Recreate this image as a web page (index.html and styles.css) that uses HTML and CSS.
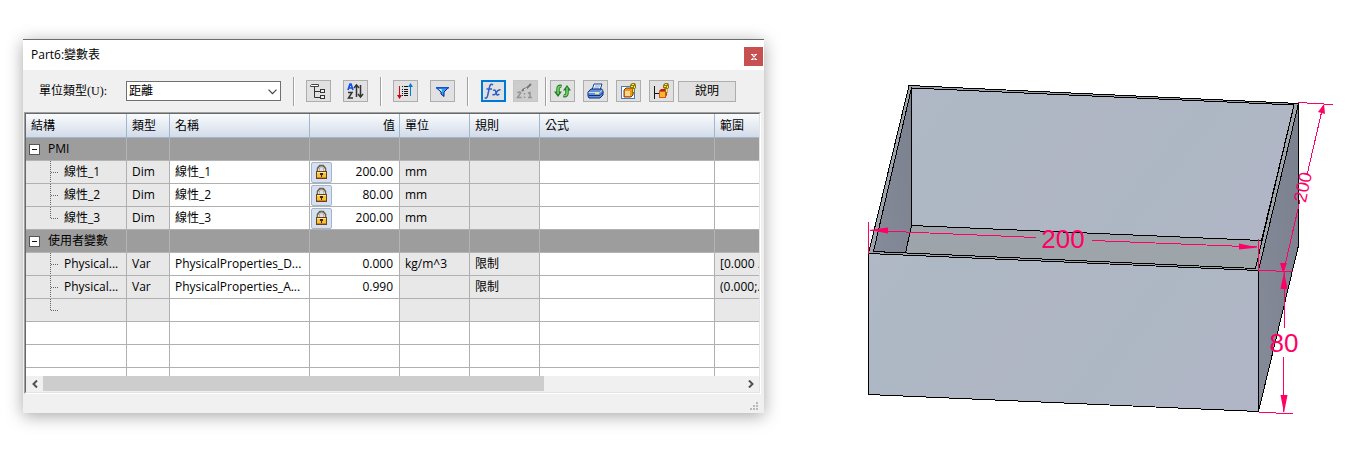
FILE: index.html
```html
<!DOCTYPE html>
<html lang="zh-Hant">
<head>
<meta charset="utf-8">
<title>Part6:變數表</title>
<link rel="stylesheet" href="styles.css">
</head>
<body>
<svg class="defs" aria-hidden="true">
  <defs>
    <symbol id="lock" viewBox="0 0 13 16">
      <path d="M3 8V4.500L5 2h3l2 2.500V8" fill="none" stroke="#6e6250" stroke-width="2.600"/>
      <path d="M3.500 7V4.800L5.200 3h2.600L9.500 4.800V7" fill="none" stroke="#e8dcc0"/>
      <rect x="1.500" y="7.500" width="10" height="7" fill="#f6c335" stroke="#70401c"/>
      <path d="M2 8.500h9" stroke="#fff0a0"/><path d="M2 13.500h9" stroke="#d08a18"/>
      <path d="M5 9h3v2H7v2H6v-2H5z" fill="#48220c"/>
    </symbol>
    <symbol id="elbow" viewBox="0 0 8 23">
      <path d="M.5 0V12" class="dots"/><path d="M1 11.500H8" class="dots"/>
    </symbol>
    <symbol id="tee" viewBox="0 0 8 23">
      <path d="M.5 0V23" class="dots"/><path d="M1 11.500H8" class="dots"/>
    </symbol>
    <symbol id="key" viewBox="0 0 6 11">
      <path d="M2 0h3l1 2v3L4.500 6v4L3 11 2 9V6L0 5V2z" fill="#8b7a14"/>
      <path d="M2 1h2v1H2zM1 3h2v1H1zM4 3h1v2H4zM3 6h1v3H3z" fill="#ffe64a"/>
    </symbol>
  </defs>
</svg>
<main class="page">
  <section class="dialog" aria-labelledby="dialog-title">
    <header class="titlebar">
      <h1 id="dialog-title">Part6:變數表</h1>
      <button class="close" type="button" aria-label="關閉"><svg width="6" height="6" viewBox="0 0 6 6"><path d="M0 .5h2.500M3.500 .5h2.500M1 .5l4 5M5 .5l-4 5M0 5.500h2.500M3.500 5.500h2.500" stroke="#fff" stroke-width="1.200"/></svg></button>
    </header>
    <div class="toolbar">
      <label for="unit-type">單位類型(U):</label>
      <span class="combo">
        <select id="unit-type"><option>距離</option></select>
        <svg width="9" height="6" viewBox="0 0 9 6"><path d="M.5.700l4 4 4-4" fill="none" stroke="#444" stroke-width="1.200"/></svg>
      </span>
      <div class="tools">
        <button type="button" aria-label="樹狀結構"><svg width="17" height="18" viewBox="0 0 17 18"><path d="M4.500 5v10.500H10M4.500 9.500H10" fill="none" stroke="#333"/><path d="M.5 4.500V3.500l1-1h7v2z" fill="#fff" stroke="#444"/><rect x="10.500" y="7.500" width="4" height="3" fill="#eee" stroke="#333"/><rect x="10.500" y="13.500" width="4" height="3" fill="#eee" stroke="#333"/></svg></button>
        <button type="button" aria-label="排序"><svg width="17" height="18" viewBox="0 0 17 18"><path d="M1 8l2-6h1L6 8M2 6h3.500" fill="none" stroke="#1450f0" stroke-width="1.700"/><path d="M1 10.500h4L1.500 16H6" fill="none" stroke="#333" stroke-width="1.500"/><path d="M9.500 15V3M13.500 3v12" stroke="#333" stroke-width="1.500"/><path d="M7 6l2.500-3L12 6M11 12l2.500 3 2.500-3" fill="none" stroke="#333" stroke-width="1.500"/></svg></button>
      </div>
      <div class="tools">
        <button type="button" aria-label="篩選排序"><svg width="17" height="18" viewBox="0 0 17 18"><path d="M2.500 4v10" stroke="#e00010"/><path d="M0 13h5l-2.500 4z" fill="#d00010"/><path d="M5 4.500h1M7 4.500h4M5 7.500h1M7 7.500h4M5 9.500h1M7 9.500h4M5 11.500h1M7 11.500h4M5 13.500h1M7 13.500h4" stroke="#111"/><path d="M13.500 14V4" stroke="#007ad8"/><path d="M11 5h5l-2.500-4z" fill="#007ad8"/></svg></button>
        <button type="button" aria-label="篩選"><svg width="15" height="14" viewBox="0 0 15 14"><path d="M1 3.500h12.500L9 8v4.500L6 10V8z" fill="#35a4ef" stroke="#111d8c"/><path d="M1 3h13v1.500H1z" fill="#1450dc"/><path d="M3.500 5h3L7 8z" fill="#c5f1ff"/></svg></button>
      </div>
      <div class="tools tools-close">
        <button class="active" type="button" aria-label="公式" aria-pressed="true"><svg width="19" height="17" viewBox="0 0 19 17"><path d="M9 2C7 0 5.800 2 5.300 5L3.800 12C3.300 15 2 16 .8 14.500M2.500 6h5.500M9 7.500c2-1.500 2.600 0 3 2 .6 3 1.600 3 3.300 1.500M16.500 7c-2-.8-3.500 1.500-4.500 3-.8 1.500-2 2.400-3.500 1.300" fill="none" stroke="#2b5fc7" stroke-width="1.500"/></svg></button>
        <button class="off" type="button" aria-label="比例" disabled><svg width="19" height="18" viewBox="0 0 19 18"><path d="M1.500 11q2.500-2 3.200 0L1.500 15.500H5.500M8.500 11v1.500M8.500 14.500V16M12 11.500l2-1v5M12 15.500h4" fill="none" stroke="#929292" stroke-width="1.400"/><path d="M6 9l2-2 3-1 4-4" fill="none" stroke="#777" stroke-width="2"/><path d="M8 8l3-2" stroke="#eee"/></svg></button>
      </div>
      <div class="tools tools-wide">
        <button type="button" aria-label="更新"><svg width="17" height="14" viewBox="0 0 17 14"><path d="M7.500 2.500Q4 1.500 4 5v4" fill="none" stroke="#237e26" stroke-width="3.500"/><path d="M0 7.500h8L4 13z" fill="#237e26"/><path d="M7 2.500Q4 2 4 5v5" fill="none" stroke="#70d764" stroke-width="1.600"/><path d="M9.500 11.500Q13 12.500 13 9V5" fill="none" stroke="#237e26" stroke-width="3.500"/><path d="M9 6.500h8L13 1z" fill="#237e26"/><path d="M10 11.500q3 .5 3-2.500V3.500" fill="none" stroke="#70d764" stroke-width="1.600"/></svg></button>
        <button type="button" aria-label="列印"><svg width="17" height="16" viewBox="0 0 17 16"><path d="M5 7l2-6h8l-2 6z" fill="#fff" stroke="#17408c"/><path d="M8 3h5M7 5h5" stroke="#759bd2"/><path d="M1 9l3-3h11l1 2v4l-3 3H2l-1-2z" fill="#5e91dd" stroke="#132d78"/><path d="M1.500 9.500h11L15.500 7" fill="none" stroke="#c6dcff"/><path d="M2 12.500h11l3-3" fill="none" stroke="#132d78"/><path d="M8 10.500h4" stroke="#ffec4e" stroke-width="1.500"/></svg></button>
        <button type="button" aria-label="鎖定視圖"><svg width="17" height="17" viewBox="0 0 17 17"><rect x="1.500" y="3.500" width="13" height="12" fill="#fff" stroke="#4878b8"/><path d="M4 7l2-2h7v7l-2 2H4z" fill="#ef9918" stroke="#7c3714"/><rect x="5" y="8" width="5" height="5" fill="#ffd58e"/><use href="#key" x="10" y="0" width="6" height="11"/></svg></button>
        <button type="button" aria-label="鎖定尺寸"><svg width="17" height="17" viewBox="0 0 17 17"><path d="M1.500 3v13M2 10.500h4" stroke="#111"/><path d="M6 8l2-2h6v6l-2 3H6z" fill="#cf1519"/><rect x="6.500" y="8.500" width="6" height="6" fill="#ffb62c" stroke="#d65518"/><use href="#key" x="10" y="0" width="6" height="11"/></svg></button>
        <button class="help" type="button">說明</button>
      </div>
    </div>
    <div class="grid-frame">
      <div class="viewport">
        <table>
          <colgroup><col class="c-tree"><col class="c-type"><col class="c-name"><col class="c-value"><col class="c-unit"><col class="c-unit"><col class="c-formula"><col></colgroup>
          <thead><tr><th>結構</th><th>類型</th><th>名稱</th><th class="num">值</th><th>單位</th><th>規則</th><th>公式</th><th>範圍</th></tr></thead>
          <tbody>
            <tr class="group"><td><div class="node"><button class="toggle" type="button" aria-label="收合 PMI"></button>PMI</div></td><td></td><td></td><td></td><td></td><td></td><td></td><td></td></tr>
            <tr><td class="ro"><div class="node leaf"><svg class="branch"><use href="#tee"/></svg>線性_1</div></td><td class="ro">Dim</td><td>線性_1</td><td class="val"><div class="locked"><button class="lock" type="button" aria-label="鎖定"><svg width="13" height="16"><use href="#lock"/></svg></button>200.00</div></td><td class="ro">mm</td><td class="ro"></td><td></td><td></td></tr>
            <tr><td class="ro"><div class="node leaf"><svg class="branch"><use href="#tee"/></svg>線性_2</div></td><td class="ro">Dim</td><td>線性_2</td><td class="val"><div class="locked"><button class="lock" type="button" aria-label="鎖定"><svg width="13" height="16"><use href="#lock"/></svg></button>80.00</div></td><td class="ro">mm</td><td class="ro"></td><td></td><td></td></tr>
            <tr><td class="ro"><div class="node leaf"><svg class="branch"><use href="#elbow"/></svg>線性_3</div></td><td class="ro">Dim</td><td>線性_3</td><td class="val"><div class="locked"><button class="lock" type="button" aria-label="鎖定"><svg width="13" height="16"><use href="#lock"/></svg></button>200.00</div></td><td class="ro">mm</td><td class="ro"></td><td></td><td></td></tr>
            <tr class="group"><td><div class="node"><button class="toggle" type="button" aria-label="收合使用者變數"></button>使用者變數</div></td><td></td><td></td><td></td><td></td><td></td><td></td><td></td></tr>
            <tr><td class="ro"><div class="node leaf"><svg class="branch"><use href="#tee"/></svg>Physical...</div></td><td class="ro">Var</td><td>PhysicalProperties_D...</td><td class="num">0.000</td><td class="ro">kg/m^3</td><td class="ro">限制</td><td></td><td class="ro">[0.000 ...</td></tr>
            <tr><td class="ro"><div class="node leaf"><svg class="branch"><use href="#tee"/></svg>Physical...</div></td><td class="ro">Var</td><td>PhysicalProperties_A...</td><td class="num">0.990</td><td class="ro"></td><td class="ro">限制</td><td></td><td class="ro">(0.000;...</td></tr>
            <tr><td class="ro"><div class="node leaf"><svg class="branch"><use href="#elbow"/></svg></div></td><td class="ro"></td><td></td><td></td><td class="ro"></td><td class="ro"></td><td></td><td class="ro"></td></tr>
            <tr><td></td><td></td><td></td><td></td><td></td><td></td><td></td><td></td></tr>
            <tr><td></td><td></td><td></td><td></td><td></td><td></td><td></td><td></td></tr>
            <tr><td></td><td></td><td></td><td></td><td></td><td></td><td></td><td></td></tr>
          </tbody>
        </table>
      </div>
      <div class="scrollbar">
        <button type="button" aria-label="向左捲動"><svg width="6" height="8" viewBox="0 0 6 8"><path d="M5 .5L1.500 4 5 7.500" fill="none" stroke="#505050" stroke-width="2"/></svg></button>
        <div class="track"><div class="thumb"></div></div>
        <button type="button" aria-label="向右捲動"><svg width="6" height="8" viewBox="0 0 6 8"><path d="M1 .5L4.500 4 1 7.500" fill="none" stroke="#505050" stroke-width="2"/></svg></button>
      </div>
    </div>
    <footer class="statusbar"><svg width="8" height="8" viewBox="0 0 8 8" fill="#b8b8b8"><path d="M6 0h2v2H6zM3 3h2v2H3zM6 3h2v2H6zM0 6h2v2H0zM3 6h2v2H3zM6 6h2v2H6z"/></svg></footer>
  </section>

  <svg class="model" viewBox="868 80 466 335" role="img" aria-label="盒體模型 200 × 200 × 80">
    <defs>
      <linearGradient id="face" x1="0" x2="1" y1="0" y2=".3"><stop offset="0" stop-color="#b1b8c7"/><stop offset=".2" stop-color="#adb8c4"/><stop offset=".5" stop-color="#b0b6c4"/><stop offset=".75" stop-color="#adb7c3"/><stop offset="1" stop-color="#b0b6c5"/></linearGradient>
      <linearGradient id="side" x1="0" x2="1" y1="1" y2="0"><stop offset="0" stop-color="#858b99"/><stop offset="1" stop-color="#7b808e"/></linearGradient>
    </defs>
    <g stroke-linejoin="round" stroke="#000" shape-rendering="crispEdges">
      <path d="M909 85.500L1298.500 103.500 1258.500 270.500 868.500 253.500z" fill="#9da5aa"/>
      <path d="M911.500 88L1294 105 1261.500 240.500 911.500 225.500z" fill="url(#face)"/>
      <path d="M911.500 88V225.500L905.500 253 873.500 251.500z" fill="url(#side)"/>
      <path d="M911.500 88L1294 105 1255.500 268.500 873.500 251.500z" fill="none"/>
      <path d="M1298.500 103.500V245.500L1258.500 411.500V270.500z" fill="url(#side)"/>
      <path d="M868.500 253.500L1258.500 270.500V411.500L868.500 394.500z" fill="url(#face)"/>
    </g>
    <g class="dimension">
      <path shape-rendering="crispEdges" d="M868.500 222v32M1258.500 239v32M870 230.500L1036 237.500M1092 240.500L1257 247M1258 270.500L1293 271.500M1259 412.500L1293 413.500M1284.500 272v56M1283.500 357v55M1298 102.500L1333 104.500M1323 106L1307 175M1300 200L1284 270"/>
      <path class="tip" d="M869 230l19-2.500v6zM1258 247.500l-19-4v6zM1284 272l-3.500 17h7zM1284 413l-3.500-18h7zM1324 104l-6 8 7 2zM1283 273l-3-10h7z"/>
      <text x="1063" y="248">200</text>
      <text x="1284" y="352">80</text>
      <text class="depth" x="1302" y="194" transform="rotate(-78 1302 187)">200</text>
    </g>
  </svg>
</main>
</body>
</html>
```
FILE: styles.css
```css
* { box-sizing: border-box; }
body {
  margin: 0;
  background: #fff;
  color: #000;
  font: 12px/16px "Open Sans", "Noto Sans CJK TC", sans-serif;
}
button { margin: 0; padding: 0; border: 0; font: inherit; color: inherit; }
.defs { position: absolute; width: 0; height: 0; }
.dots { stroke: #666; stroke-dasharray: 1 1; fill: none; }

.page {
  display: grid;
  grid-template-columns: minmax(0, 741fr) minmax(0, 466fr);
  gap: 104px;
  align-items: start;
  padding: 39px 36px 56px 23px;
}
.dialog {
  background: #f0f0f0;
  border-top: 1px solid #6b6b6b;
  box-shadow: 0 3px 16px rgba(0, 0, 0, .35);
}
.titlebar {
  display: flex;
  justify-content: space-between;
  height: 30px;
  padding: 7px 1px 0 8px;
  background: #fff;
}
.titlebar h1 { margin: 0; font-size: 12px; font-weight: 400; }
.close {
  display: grid;
  place-items: center;
  width: 19px;
  height: 19px;
  background: #c75050;
}

.toolbar {
  display: flex;
  align-items: center;
  height: 42px;
  padding-left: 16px;
}
.toolbar label {
  width: 87px;
  font-family: "Liberation Serif", "Noto Sans CJK TC", serif;
}
.combo { position: relative; display: flex; margin-right: 12px; }
.combo select {
  width: 155px;
  height: 20px;
  padding: 0 2px;
  appearance: none;
  border: 1px solid #707070;
  border-radius: 0;
  background: #fff;
  color: #000;
  font: inherit;
}
.combo svg { position: absolute; right: 4px; top: 8px; pointer-events: none; }
.tools {
  display: flex;
  align-items: center;
  gap: 12px;
  height: 29px;
  padding: 0 12px;
  border-left: 1px solid #a0a0a0;
  box-shadow: inset 1px 0 #fff;
}
.tools-close { gap: 7px; padding: 0 7px 0 13px; }
.tools-wide { gap: 8px; padding: 0 0 0 4px; }
.tools button {
  display: grid;
  place-items: center;
  width: 25px;
  height: 22px;
  border: 1px solid #adadad;
  background: #e1e1e1;
}
.tools .active { border: 2px solid #0078d7; }
.tools .off { border-color: #c6c6c6; background: #cccccc; }
.tools .help { width: 58px; height: 21px; margin-left: -4px; }

.grid-frame {
  margin: 0 3px 0 1px;
  border: 1px solid;
  border-color: #a0a0a0 #fff #fff #a0a0a0;
}
.viewport {
  height: 263px;
  overflow: hidden;
  border: 1px solid;
  border-color: #696969 #e3e3e3 #fff #696969;
  border-bottom: 0;
  background: #fff;
}
table {
  width: 800px;
  min-width: 100%;
  table-layout: fixed;
  border-collapse: separate;
  border-spacing: 0;
}
.c-tree { width: 101px; }
.c-type { width: 43px; }
.c-name { width: 140px; }
.c-value { width: 90px; }
.c-unit { width: 70px; }
.c-formula { width: 175px; }
th, td {
  height: 23px;
  padding: 0 5px;
  overflow: hidden;
  border: solid #b0b0b0;
  border-width: 0 1px 1px 0;
  text-align: left;
  font-weight: 400;
  white-space: nowrap;
}
th {
  height: 24px;
  border-color: #9eb6ce;
  background: linear-gradient(#f9fcfd, #d3dbe9);
}
.ro { background: #e8e8e8; }
.group td { background: #9d9d9d; border-color: #b4b4b4; }
.num, .val { text-align: right; padding-right: 6px; }
th.num { padding-right: 4px; }
.node { display: flex; align-items: center; }
.leaf { height: 22px; padding-left: 19px; gap: 6px; }
.branch { flex: none; width: 8px; height: 23px; }
.toggle {
  width: 11px;
  height: 11px;
  margin: 0 8px 0 -2px;
  border: 1px solid #555;
  background: linear-gradient(#111, #111) center / 5px 1px no-repeat #fff;
}
.val { padding-left: 1px; }
.locked { display: flex; justify-content: space-between; align-items: center; }
.lock {
  display: grid;
  place-items: center;
  width: 21px;
  height: 21px;
  border: 1px solid #a3b5c9;
  border-radius: 2px;
  background: #d5e1f2;
}

.scrollbar {
  display: flex;
  height: 17px;
  border: solid;
  border-width: 0 1px 1px 1px;
  border-color: #696969 #e3e3e3 #e3e3e3 #696969;
  background: #f0f0f0;
}
.scrollbar button { display: grid; place-items: center; width: 17px; background: none; }
.track { flex: 1; padding-bottom: 1px; }
.thumb { width: 501px; max-width: 100%; height: 100%; background: #cdcdcd; }
.statusbar { display: flex; justify-content: flex-end; align-items: flex-end; height: 19px; padding: 0 6px 3px; }

.model { display: block; width: 100%; height: auto; overflow: visible; margin-top: 41px; }
.dimension { fill: none; stroke: #ff0066; }
.dimension .tip { fill: #ff0066; stroke: none; }
.dimension text {
  fill: #ff0066;
  stroke: none;
  font: 26px "Liberation Sans", sans-serif;
  text-anchor: middle;
}
.dimension .depth { font-size: 18px; }
```
